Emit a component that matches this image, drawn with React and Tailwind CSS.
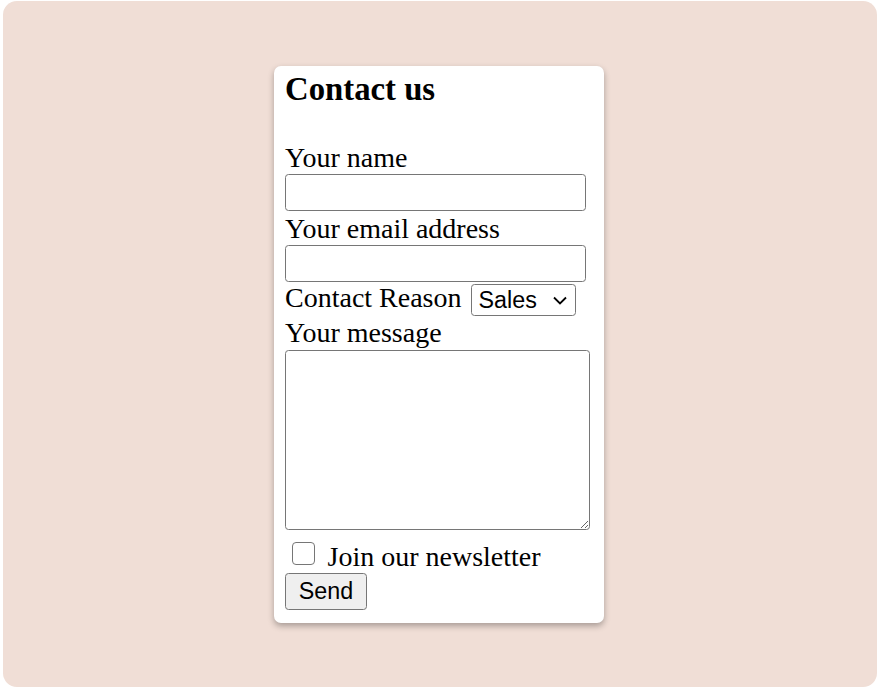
export default function App() {
  return (
    <div className="min-h-[689px] bg-white pl-[3px] pt-[1px]">
      <div className="flex h-[686px] w-[874px] items-center justify-center rounded-[14px] bg-[#f0ded6]">
        <form className="mr-[2px] flex w-[330px] flex-col rounded-[7px] bg-white pb-[13px] pl-[11px] pt-[4px] font-['Liberation_Serif',serif] text-black shadow-[0_3px_6px_rgba(0,0,0,0.3)]">
          <h3 className="text-[32.76px] font-bold leading-[38px]">Contact us</h3>

          <label className="mt-[32px] h-[34px] pt-[2px] text-[28px] leading-[32px]">Your name</label>
          <input
            type="text"
            className="h-[37px] w-[301px] rounded-[3.5px] border-[1.75px] border-[#767676] bg-white"
          />

          <label className="h-[34px] pt-[2px] text-[28px] leading-[32px]">Your email address</label>
          <input
            type="email"
            className="h-[37px] w-[301px] rounded-[3.5px] border-[1.75px] border-[#767676] bg-white"
          />

          <div className="flex h-[34px] items-start">
            <span className="text-[28px] leading-[32px]">Contact Reason</span>
            <div className="relative ml-[9px] mt-[2px] h-[32px] w-[105px]">
              <select className="h-full w-full appearance-none rounded-[3.5px] border-[1.75px] border-[#767676] bg-white pl-[7px] font-['Liberation_Sans',sans-serif] text-[23.3px] leading-[28px]">
                <option>Sales</option>
                <option>Support</option>
                <option>Other</option>
              </select>
              <svg
                className="pointer-events-none absolute right-[9px] top-[12px]"
                width="14"
                height="9"
                viewBox="0 0 14 9"
                fill="none"
              >
                <path d="M1 1.5l6 6 6-6" stroke="#000" strokeWidth="1.8" />
              </svg>
            </div>
          </div>

          <label className="h-[34px] pt-[1px] text-[28px] leading-[32px]">Your message</label>
          <textarea className="h-[180px] w-[305px] resize rounded-[3.5px] border-[1.75px] border-[#767676] bg-white" />

          <div className="flex h-[43px] items-start">
            <span className="ml-[7px] mt-[12.7px] h-[23px] w-[23px] rounded-[4px] border-[1.75px] border-[#767676] bg-white" />
            <span className="ml-[12.5px] mt-[10px] text-[28px] leading-[34px]">
              Join our newsletter
            </span>
          </div>

          <button
            type="button"
            className="h-[37px] w-[82px] rounded-[3.5px] border-[1.75px] border-[#767676] bg-[#efefef] font-['Liberation_Sans',sans-serif] text-[23.3px] leading-[28px]"
          >
            Send
          </button>
        </form>
      </div>
    </div>
  );
}
